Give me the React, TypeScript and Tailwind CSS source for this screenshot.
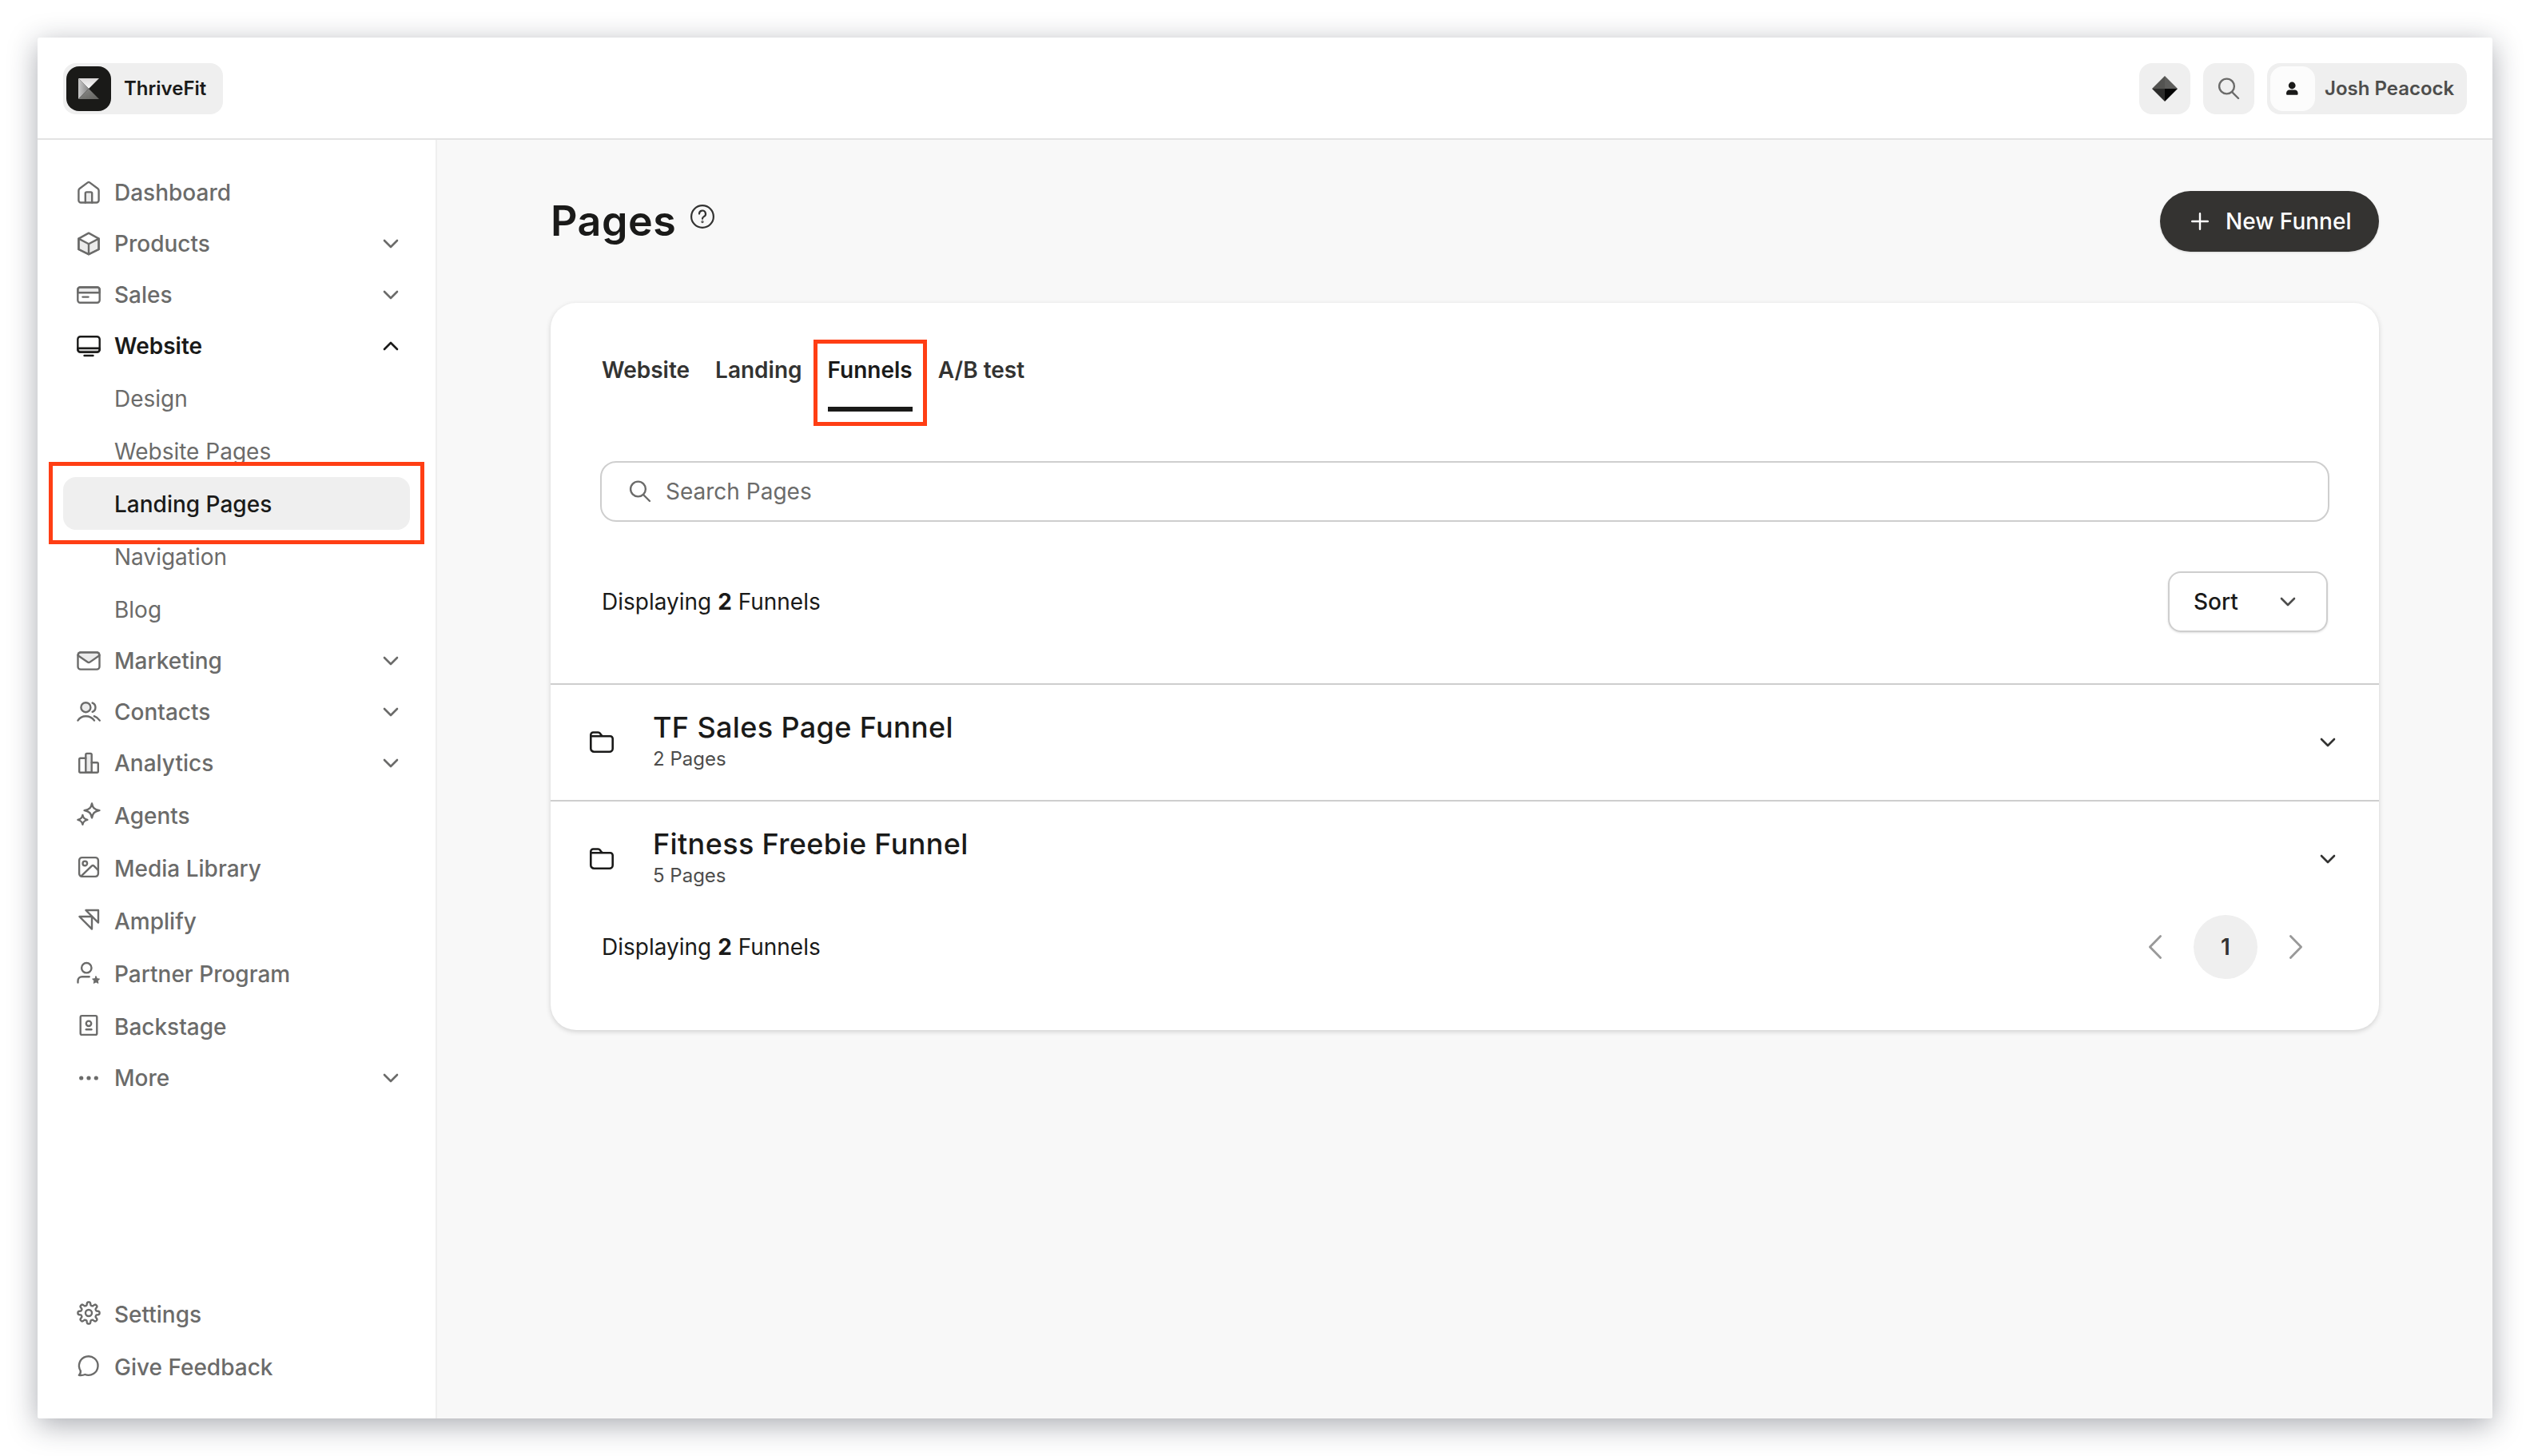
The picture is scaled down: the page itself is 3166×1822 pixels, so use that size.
import type { ReactNode } from "react";

type NavItem = {
  label: string;
  icon: ReactNode;
  expandable?: boolean;
  open?: boolean;
  compact?: boolean;
  children?: string[];
};

function Icon({ children, width = 2.4 }: { children: ReactNode; width?: number }) {
  return (
    <svg
      viewBox="0 0 32 32"
      className="w-8 h-8 shrink-0"
      fill="none"
      stroke="currentColor"
      strokeWidth={width}
      strokeLinecap="round"
      strokeLinejoin="round"
    >
      {children}
    </svg>
  );
}

const ChevronDown = () => (
  <Icon width={2.6}>
    <path d="M8 12L16 20L24 12" />
  </Icon>
);

const ChevronUp = () => (
  <Icon width={2.6}>
    <path d="M8 20L16 12L24 20" />
  </Icon>
);

const SearchIcon = () => (
  <Icon width={2.4}>
    <circle cx="13.5" cy="13" r="9.4" />
    <path d="M20.5 20.5L28 28" />
  </Icon>
);

const FolderIcon = () => (
  <Icon width={2.6}>
    <path d="M2.3 10V6.5a3 3 0 0 1 3-3h6.2a3 3 0 0 1 2.4 1.2l1.6 2.4a3 3 0 0 0 2.4 1.2h8.8a3 3 0 0 1 3 3v12.4a4 4 0 0 1-4 4H6.3a4 4 0 0 1-4-4V8.3h14" />
  </Icon>
);

// gear outline with eight rounded teeth
const gearPath = (() => {
  const points: string[] = [];
  for (let i = 0; i < 160; i++) {
    const a = (i / 160) * Math.PI * 2;
    const r = 11.6 + 2 * Math.tanh(2.2 * Math.cos(8 * a));
    points.push(`${(16 + r * Math.sin(a)).toFixed(2)} ${(16 - r * Math.cos(a)).toFixed(2)}`);
  }
  return `M${points.join("L")}Z`;
})();

const navItems: NavItem[] = [
  {
    label: "Dashboard",
    compact: true,
    icon: (
      <Icon>
        <path d="M11.8 28.5V17a1.6 1.6 0 0 1 1.6-1.6h5.2a1.6 1.6 0 0 1 1.6 1.6v11.5" fill="#ebebeb" />
        <path d="M3.4 13.4a3 3 0 0 1 1.2-2.4l10.2-7.6a2 2 0 0 1 2.4 0L27.4 11a3 3 0 0 1 1.2 2.4v12.3a2.8 2.8 0 0 1-2.8 2.8H6.2a2.8 2.8 0 0 1-2.8-2.8z" />
      </Icon>
    ),
  },
  {
    label: "Products",
    expandable: true,
    icon: (
      <Icon>
        <path d="M3.4 9.6L16 16.2L28.6 9.6V23L16 29.3L3.4 23z" fill="#ebebeb" />
        <path d="M3.4 9.6L16 2.6L28.6 9.6V23L16 29.3L3.4 23zM16 16.2v13" />
      </Icon>
    ),
  },
  {
    label: "Sales",
    expandable: true,
    icon: (
      <Icon>
        <path d="M2.3 13.3V9.5a3 3 0 0 1 3-3h21.4a3 3 0 0 1 3 3v3.8z" fill="#ebebeb" />
        <rect x="2.3" y="6.5" width="27.4" height="19.2" rx="3" />
        <path d="M8.5 18.6h7" />
      </Icon>
    ),
  },
  {
    label: "Website",
    expandable: true,
    open: true,
    children: ["Design", "Website Pages", "Landing Pages", "Navigation", "Blog"],
    icon: (
      <Icon>
        <path d="M2.3 18.8h27.4v1.8a3 3 0 0 1-3 3H5.3a3 3 0 0 1-3-3z" fill="#cfcfcf" />
        <rect x="2.3" y="4.2" width="27.4" height="19.4" rx="3.4" />
        <path d="M10.5 28h11" />
      </Icon>
    ),
  },
  {
    label: "Marketing",
    expandable: true,
    icon: (
      <Icon>
        <path d="M2.6 9.2L14.6 17.6a2.4 2.4 0 0 0 2.8 0L29.4 9.2L28.4 6.2L26.6 5.4H5.4L3.4 6.4z" fill="#ebebeb" />
        <rect x="2.5" y="5.4" width="27" height="21.2" rx="3.4" />
      </Icon>
    ),
  },
  {
    label: "Contacts",
    expandable: true,
    icon: (
      <Icon>
        <circle cx="12.4" cy="10.2" r="6" fill="#ebebeb" />
        <path d="M20.6 4.6a6 6 0 0 1 0 11.2" />
        <path d="M2.4 26.6C4.8 23 8 21.2 12.4 21.2S20.4 23 23 26.6" />
        <path d="M22.8 21.2c3 1 5.2 2.8 7 5.4" />
      </Icon>
    ),
  },
  {
    label: "Analytics",
    expandable: true,
    icon: (
      <Icon>
        <path d="M12.3 27.8V5.4a1.5 1.5 0 0 1 1.5-1.5h4.4a1.5 1.5 0 0 1 1.5 1.5v22.4z" fill="#ebebeb" />
        <path d="M12.3 9.8H5.7a1.5 1.5 0 0 0-1.5 1.5v15a1.5 1.5 0 0 0 1.5 1.5h20.6a1.5 1.5 0 0 0 1.5-1.5v-9.6a1.5 1.5 0 0 0-1.5-1.5h-6.6" />
      </Icon>
    ),
  },
  {
    label: "Agents",
    icon: (
      <Icon>
        <path d="M20 2.4C21.2 8 22.8 9.8 29.4 11.2C22.8 12.6 21.2 14.6 20 20.4C18.8 14.6 17.2 12.6 10.6 11.2C17.2 9.8 18.8 8 20 2.4Z" />
        <path d="M8.4 17C9.2 20.6 10.4 21.9 14.4 22.9C10.4 23.9 9.2 25.2 8.4 28.8C7.6 25.2 6.4 23.9 2.4 22.9C6.4 21.9 7.6 20.6 8.4 17Z" />
      </Icon>
    ),
  },
  {
    label: "Media Library",
    icon: (
      <Icon>
        <rect x="4.1" y="4.1" width="23.8" height="23.8" rx="3.6" />
        <circle cx="11.3" cy="11.4" r="2.8" />
        <path d="M6.8 27.2L19.8 14.6a2 2 0 0 1 2.8 0L27.8 20" />
      </Icon>
    ),
  },
  {
    label: "Amplify",
    icon: (
      <Icon>
        <path d="M12.4 4H28v15.6z" />
        <path d="M4.4 12H20v15.6z" />
      </Icon>
    ),
  },
  {
    label: "Partner Program",
    icon: (
      <Icon>
        <circle cx="13.3" cy="10.2" r="6.2" />
        <path d="M2.5 28.6V26.4a5.2 5.2 0 0 1 5.2-5.2h9" />
        <path
          d="M25.1 20.8l1.4 2.9 3.1.4-2.3 2.2.6 3.1-2.8-1.5-2.8 1.5.6-3.1-2.3-2.2 3.1-.4z"
          fill="currentColor"
          strokeWidth="1"
        />
      </Icon>
    ),
  },
  {
    label: "Backstage",
    icon: (
      <Icon>
        <rect x="5.7" y="4.1" width="20.6" height="23.8" rx="1.6" />
        <circle cx="16" cy="13.8" r="3.2" />
        <path d="M12.8 21.2h6.6" />
      </Icon>
    ),
  },
  {
    label: "More",
    expandable: true,
    icon: (
      <Icon>
        <g fill="currentColor" stroke="none">
          <circle cx="6.7" cy="16" r="2.6" />
          <circle cx="16" cy="16" r="2.6" />
          <circle cx="25.3" cy="16" r="2.6" />
        </g>
      </Icon>
    ),
  },
];

const footerItems: NavItem[] = [
  {
    label: "Settings",
    icon: (
      <Icon>
        <path d={gearPath} />
        <circle cx="16" cy="16" r="4" />
      </Icon>
    ),
  },
  {
    label: "Give Feedback",
    icon: (
      <Icon>
        <path d="M3.8 27.8a6 6 0 0 0 2-5.4A11.8 11.8 0 1 1 11.4 27C9 28 6.4 28.2 3.8 27.8z" />
      </Icon>
    ),
  },
];

const funnels = [
  { name: "TF Sales Page Funnel", pages: 2 },
  { name: "Fitness Freebie Funnel", pages: 5 },
];

const tabs = ["Website", "Landing", "Funnels", "A/B test"];

function NavRow({ item }: { item: NavItem }) {
  const short = item.expandable || item.compact;
  return (
    <>
      <div
        className={`flex items-center gap-4 pl-4 pr-2 text-[28px] ${short ? "h-16" : "h-[66px]"} ${
          item.open ? "font-semibold text-[#1a1a19]" : "font-medium text-[#6b6b6a]"
        }`}
      >
        <span className={short ? "" : "pb-0.5"}>{item.icon}</span>
        <span className={short ? "flex-1" : "flex-1 pt-px"}>{item.label}</span>
        {item.expandable && (item.open ? <ChevronUp /> : <ChevronDown />)}
      </div>
      {item.children?.map((child) => {
        const active = child === "Landing Pages";
        return (
          <div
            key={child}
            className={`relative flex h-[66px] items-center rounded-2xl pl-16 pt-px text-[28px] ${
              active ? "bg-[#efefef] font-medium text-[#1a1a19]" : "text-[#6b6b6a]"
            }`}
          >
            {child}
            {active && (
              <div className="absolute -top-[19px] -bottom-[18px] -left-[18px] -right-[18px] z-10 border-[5px] border-[#ff3e14]" />
            )}
          </div>
        );
      })}
    </>
  );
}

function Header() {
  return (
    <header className="flex h-32 shrink-0 items-center justify-between border-b-2 border-[#e3e3e3] px-8 pt-0.5">
      <div className="flex h-16 w-[200px] items-center gap-4 rounded-2xl bg-[#efefef] pl-1">
        <div className="flex h-14 w-14 items-center justify-center rounded-2xl bg-[#1a1a18]">
          <svg viewBox="0 0 26 26" className="h-[26px] w-[26px]">
            <defs>
              <linearGradient id="kTop" x1="0" y1="0" x2="0" y2="1">
                <stop offset="0" stopColor="#dad8d8" />
                <stop offset="1" stopColor="#fbfbfb" />
              </linearGradient>
              <linearGradient id="kLeft" x1="0" y1="0" x2="1" y2="0">
                <stop offset="0" stopColor="#c9c9c9" />
                <stop offset="1" stopColor="#858585" />
              </linearGradient>
              <linearGradient id="kBottom" x1="0" y1="0" x2="1" y2="1">
                <stop offset="0" stopColor="#8c8c8a" />
                <stop offset="1" stopColor="#63635f" />
              </linearGradient>
            </defs>
            <path d="M0 0H26L13 13z" fill="url(#kTop)" />
            <path d="M0 0L13 13L0 26z" fill="url(#kLeft)" />
            <path d="M0 26L13 13L26 26z" fill="url(#kBottom)" />
          </svg>
        </div>
        <span className="text-[24px] font-semibold text-[#1a1a19]">ThriveFit</span>
      </div>
      <div className="flex items-center gap-4">
        <div className="flex h-16 w-16 items-center justify-center rounded-2xl bg-[#efefef]">
          <svg viewBox="0 0 32 32" className="h-8 w-8">
            <path d="M16 0V16H0z" fill="#535351" />
            <path d="M16 0L32 16H16z" fill="#5d5d5b" />
            <path d="M0 16H16V32z" fill="#2b2b2a" />
            <path d="M16 16H32L16 32z" fill="#050505" />
          </svg>
        </div>
        <div className="flex h-16 w-16 items-center justify-center rounded-2xl bg-[#efefef] text-[#6b6b6a]">
          <SearchIcon />
        </div>
        <div className="flex h-16 w-[250px] items-center gap-3 rounded-2xl bg-[#efefef] pl-1">
          <div className="flex h-14 w-14 items-center justify-center rounded-2xl bg-[#fcfcfc]">
            <svg viewBox="0 0 16 16" className="h-4 w-4 overflow-visible" fill="#1a1a19">
              <circle cx="7.2" cy="4" r="4.4" />
              <path d="M0 14.2c0-3 1.6-4.6 4-4.6h6.6c2.4 0 4 1.6 4 4.6 0 1-.6 1.6-1.6 1.6H1.6C.6 15.8 0 15.2 0 14.2z" />
            </svg>
          </div>
          <span className="text-[24px] font-semibold text-[#4d4d4c]">Josh Peacock</span>
        </div>
      </div>
    </header>
  );
}

function Sidebar() {
  return (
    <aside className="flex w-[500px] shrink-0 flex-col justify-between border-r-2 border-[#efefef] bg-white px-8 pb-8 pt-[34px]">
      <nav>
        {navItems.map((item) => (
          <NavRow key={item.label} item={item} />
        ))}
      </nav>
      <nav>
        {footerItems.map((item) => (
          <NavRow key={item.label} item={item} />
        ))}
      </nav>
    </aside>
  );
}

function DisplayCount() {
  return (
    <p className="text-[28px] text-[#1a1a19]">
      Displaying <b className="font-bold">2</b> Funnels
    </p>
  );
}

export default function App() {
  return (
    <div className="h-[1822px] w-[3166px] overflow-hidden bg-white p-[47px] font-['Inter',sans-serif]">
      <div className="flex h-[1728px] w-[3072px] flex-col overflow-hidden rounded-[3px] bg-white shadow-[0_8px_36px_rgba(30,34,50,0.38)]">
        <Header />
        <div className="flex flex-1">
          <Sidebar />
          <main className="flex-1 bg-[#f8f8f8] px-[142px] pt-16">
            <div className="flex h-[76px] items-center justify-between">
              <div className="flex items-center gap-[17px] text-[#1a1a19]">
                <h1 className="text-[52px] font-semibold tracking-[0.5px]">Pages</h1>
                <span className="pb-3 text-[#333332]">
                  <Icon width={2.2}>
                    <circle cx="16" cy="16" r="13.9" />
                    <path d="M12 12.6a4 4 0 1 1 5.8 3.5c-1.2.7-1.8 1.3-1.8 2.7" />
                    <circle cx="16" cy="22.6" r="0.5" />
                  </Icon>
                </span>
              </div>
              <button className="flex h-[76px] w-[274px] items-center gap-4 rounded-full bg-[#343331] pl-[34px] text-[28px] font-medium text-white shadow-sm">
                <Icon width={2.4}>
                  <path d="M16 6.2v19.6M6.2 16h19.6" />
                </Icon>
                New Funnel
              </button>
            </div>

            <section className="mt-16 h-[910px] rounded-[32px] bg-white pt-8 shadow-[0_2px_6px_rgba(0,0,0,0.16)]">
              <div className="flex h-[104px] gap-8 px-16">
                {tabs.map((tab) => {
                  const active = tab === "Funnels";
                  return (
                    <div
                      key={tab}
                      className={`relative flex items-center text-[28px] font-semibold ${
                        active ? "text-[#1a1a19]" : "text-[#333332]"
                      }`}
                    >
                      {tab}
                      {active && (
                        <>
                          <div className="absolute inset-x-0 bottom-0 h-1.5 bg-[#1a1a19]" />
                          <div className="absolute -bottom-[18px] -left-[18px] -right-[18px] top-[14px] border-[5px] border-[#ff3e14]" />
                        </>
                      )}
                    </div>
                  );
                })}
              </div>

              <div className="mx-[62px] mt-[62px] flex h-[76px] items-center gap-4 rounded-[20px] border-2 border-[#cecece] pl-8 text-[28px] text-[#6b6b6a]">
                <SearchIcon />
                Search Pages
              </div>

              <div className="mt-[62px] flex h-[76px] items-center justify-between px-16">
                <DisplayCount />
                <button className="flex h-[76px] w-[200px] items-center justify-between rounded-2xl border-2 border-[#cecece] pl-[30px] pr-8 text-[28px] font-medium text-[#1a1a19] shadow-sm">
                  Sort
                  <span className="text-[#4d4d4c]">
                    <ChevronDown />
                  </span>
                </button>
              </div>

              <div className="mt-16">
                {funnels.map((funnel) => (
                  <div
                    key={funnel.name}
                    className="flex h-[146px] items-center border-t-2 border-[#cecece] px-12 text-[#1a1a19]"
                  >
                    <FolderIcon />
                    <div className="ml-12 flex-1 pb-0.5">
                      <h2 className="mb-0.5 text-[36px] font-medium leading-[42px] tracking-[0.36px]">{funnel.name}</h2>
                      <p className="text-[24px] leading-[34px] text-[#4d4d4c]">{funnel.pages} Pages</p>
                    </div>
                    <span className="text-[#333332]">
                      <ChevronDown />
                    </span>
                  </div>
                ))}
              </div>

              <div className="-mt-0.5 flex h-20 items-center justify-between px-16">
                <DisplayCount />
                <div className="flex items-center text-[#999999]">
                  <Icon width={2.8}>
                    <path d="M22.6 2.4L9.4 16L22.6 29.6" />
                  </Icon>
                  <div className="mx-8 flex h-20 w-20 items-center justify-center rounded-full bg-[#efefef] text-[28px] font-semibold text-[#333332]">
                    1
                  </div>
                  <span className="mr-6">
                    <Icon width={2.8}>
                      <path d="M9.4 2.4L22.6 16L9.4 29.6" />
                    </Icon>
                  </span>
                </div>
              </div>
            </section>
          </main>
        </div>
      </div>
    </div>
  );
}
